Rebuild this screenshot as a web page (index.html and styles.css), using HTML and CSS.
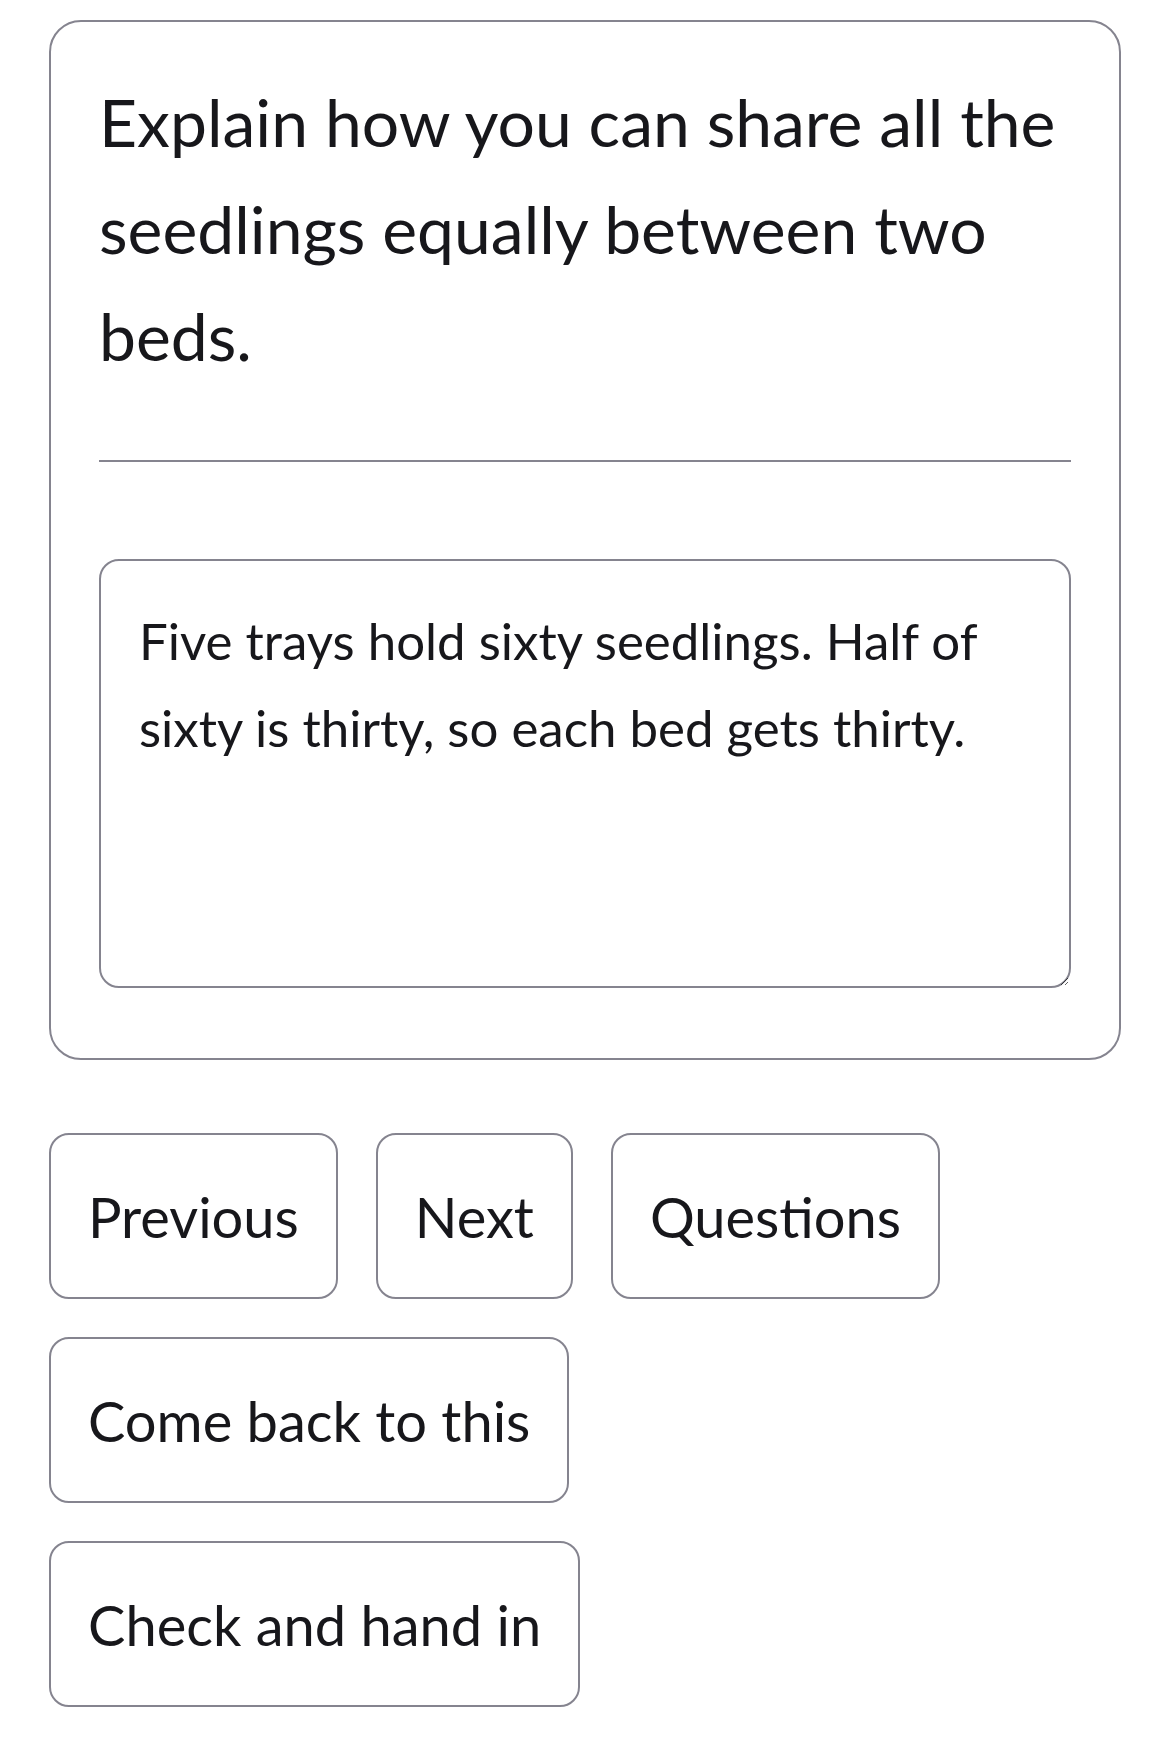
FILE: index.html
```html
<!DOCTYPE html>
<html lang="en">
<head>
<meta charset="utf-8">
<title>Question</title>
<link rel="stylesheet" href="styles.css">
</head>
<body>
<main class="page">
  <section class="card">
    <h1 class="prompt">Explain how you can share all the seedlings equally between two beds.</h1>
    <div class="divider"></div>
    <textarea class="answer" aria-label="Your answer">Five trays hold sixty seedlings. Half of sixty is thirty, so each bed gets thirty.</textarea>
  </section>
  <nav class="actions">
    <button class="btn" type="button">Previous</button>
    <button class="btn" type="button">Next</button>
    <button class="btn" type="button">Questions</button>
    <button class="btn" type="button">Come back to this</button>
    <button class="btn" type="button">Check and hand in</button>
  </nav>
</main>
</body>
</html>
```
FILE: styles.css
```css
html, body {
  margin: 0;
  padding: 0;
  background: #ffffff;
}

body {
  font-family: "Lato", "Open Sans", "Noto Sans", sans-serif;
  color: #17171b;
}

.page {
  padding: 20px 49px 40px;
}

.card {
  border: 2px solid #85848f;
  border-radius: 32px;
  padding: 46px 48px 70px;
}

.prompt {
  margin: 0 0 71px;
  font-size: 66px;
  font-weight: 400;
  line-height: 107px;
  color: #17171b;
}

.divider {
  height: 2px;
  background: #85848f;
  margin-bottom: 97px;
}

.answer {
  display: block;
  box-sizing: border-box;
  width: 100%;
  height: 429px;
  margin: 0;
  padding: 36px 38px;
  border: 2px solid #85848f;
  border-radius: 20px;
  font-family: "Lato", "Open Sans", "Noto Sans", sans-serif;
  font-size: 51px;
  line-height: 87px;
  color: #17171b;
  background: #ffffff;
  outline: none;
}

.actions {
  display: flex;
  flex-wrap: wrap;
  gap: 38px;
  margin-top: 73px;
  align-items: flex-start;
}

.btn {
  font-family: "Lato", "Open Sans", "Noto Sans", sans-serif;
  font-size: 56px;
  line-height: 90px;
  color: #17171b;
  background: #ffffff;
  border: 2px solid #85848f;
  border-radius: 20px;
  padding: 37px 37px 35px;
  margin: 0;
  cursor: pointer;
}
```
